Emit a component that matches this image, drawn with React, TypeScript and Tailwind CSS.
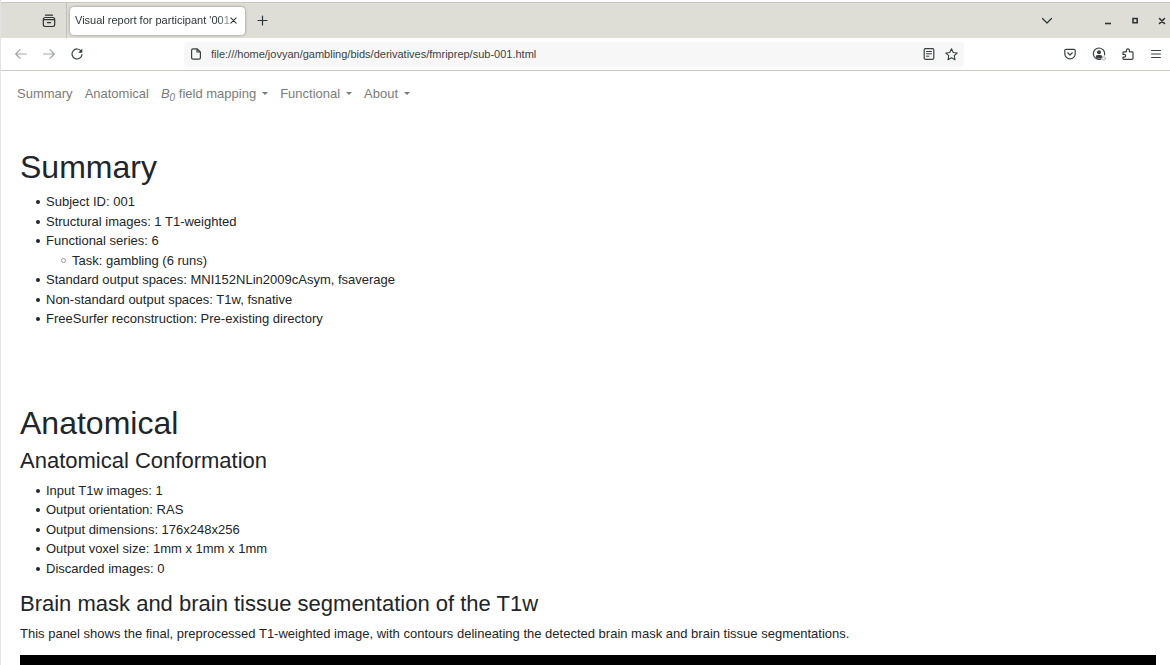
import type { ReactNode } from "react";

function Icon({ children, className = "size-4", box = "0 0 16 16" }: { children: ReactNode; className?: string; box?: string }) {
  return (
    <svg viewBox={box} className={`shrink-0 ${className}`} fill="none" stroke="currentColor" strokeWidth="1.2" strokeLinecap="round" strokeLinejoin="round" aria-hidden="true">
      {children}
    </svg>
  );
}

function IconButton({ label, className = "", children }: { label: string; className?: string; children: ReactNode }) {
  return (
    <button type="button" aria-label={label} className={`flex shrink-0 items-center justify-center ${className}`}>
      {children}
    </button>
  );
}

function TabBar() {
  return (
    <div className="flex h-9 items-center border-t border-[#c9c8c0] bg-[#deddd6] text-[#2e3436]">
      <div className="flex h-full w-[66px] shrink-0 items-center justify-end border-r border-[#c0bfb8] pr-[10px]">
        <IconButton label="Recent browsing">
          <Icon className="size-[14px]" box="0 0 14 14">
            <path d="M3.500 1.200h7" />
            <path d="M1.300 5.400q0-1.900 1.900-1.900h7.600q1.900 0 1.900 1.900v5.200q0 1.900-1.900 1.900H3.200q-1.900 0-1.900-1.900zM1.500 5.600h11M5.400 8.600h3.200" />
          </Icon>
        </IconButton>
      </div>
      <div className="ml-[3px] flex h-7 w-[175px] shrink-0 items-center rounded bg-white pr-2 pl-[5px] shadow-[0_0_3px_rgba(0,0,0,0.4)]">
        <span className="min-w-0 flex-1 overflow-hidden text-[11px] whitespace-nowrap [mask-image:linear-gradient(to_right,black_92%,rgba(0,0,0,0.4))]">
          Visual report for participant &apos;001
        </span>
        <IconButton label="Close tab">
          <Icon className="size-[7px]" box="0 0 8 8">
            <path d="M1 1l6 6M7 1L1 7" />
          </Icon>
        </IconButton>
      </div>
      <IconButton label="New tab" className="ml-3">
        <Icon className="size-[11px]" box="0 0 11 11">
          <path d="M5.500 1v9M1 5.500h9" />
        </Icon>
      </IconButton>
      <div className="ml-auto flex shrink-0 items-center">
        <IconButton label="List all tabs" className="mr-[51px]">
          <Icon className="size-[12px]" box="0 0 12 12">
            <path d="M1.500 3.500L6 8l4.500-4.500" />
          </Icon>
        </IconButton>
        <IconButton label="Minimize" className="mr-[19px]">
          <Icon className="size-2" box="0 0 8 8">
            <path d="M1 6.500h6" strokeWidth="1.600" strokeLinecap="butt" />
          </Icon>
        </IconButton>
        <IconButton label="Maximize" className="mr-[19px]">
          <Icon className="size-2" box="0 0 8 8">
            <path d="M2 1.500h4.200v4.200H2z" strokeWidth="1.600" strokeLinejoin="miter" />
          </Icon>
        </IconButton>
        <IconButton label="Close window" className="mr-1">
          <Icon className="size-2" box="0 0 8 8">
            <path d="M1.500 1.500l5 5M6.500 1.500l-5 5" strokeWidth="1.600" />
          </Icon>
        </IconButton>
      </div>
    </div>
  );
}

function Toolbar() {
  return (
    <div className="flex h-[33px] items-center border-b border-[#cccbc4] bg-white text-[#3b4042]">
      <div className="flex w-[183px] shrink-0 items-center gap-4 pl-[14px]">
        <IconButton label="Back" className="text-[#a3a5a6]">
          <Icon className="size-3" box="0 0 12 12">
            <path d="M11.400 6H.8M5 1.600L.7 6 5 10.400" />
          </Icon>
        </IconButton>
        <IconButton label="Forward" className="text-[#a3a5a6]">
          <Icon className="size-3" box="0 0 12 12">
            <path d="M.6 6h10.600M7 1.600L11.300 6 7 10.400" />
          </Icon>
        </IconButton>
        <IconButton label="Reload">
          <Icon className="size-3" box="0 0 12 12">
            <path d="M10.200 3.200A5 5 0 1 0 11 6.600" />
            <path d="M11.300.8v4H7.200z" fill="currentColor" stroke="none" />
          </Icon>
        </IconButton>
      </div>
      <div className="flex h-[25px] w-full max-w-[780px] min-w-0 items-center rounded bg-[#f7f7f7] px-[6px]">
        <Icon className="size-3" box="0 0 12 12">
          <path d="M3 .8h4L10.400 4v5.800q0 1.400-1.400 1.400H3q-1.400 0-1.400-1.400V2.200Q1.600.8 3 .8zM7 .8V4h3.400" />
        </Icon>
        <input
          aria-label="Address"
          defaultValue="file:///home/jovyan/gambling/bids/derivatives/fmriprep/sub-001.html"
          className="ml-[9px] min-w-0 flex-1 bg-transparent pt-px text-[11px] outline-none"
        />
        <IconButton label="Reader view" className="mr-[10px]">
          <Icon className="size-3" box="0 0 12 12">
            <rect x="1.200" y=".7" width="9.600" height="10.600" rx="1.200" />
            <path d="M3.500 3.500h5M3.500 5.800h5M3.500 8.200h2.500" strokeWidth="1" />
          </Icon>
        </IconButton>
        <IconButton label="Bookmark this page">
          <Icon className="size-[13px]" box="0 0 13 13">
            <path d="M6.500.8l1.700 3.700 4 .5-3 2.700.8 4-3.500-2-3.500 2 .8-4-3-2.700 4-.5z" strokeWidth="1.100" />
          </Icon>
        </IconButton>
      </div>
      <div className="ml-auto flex shrink-0 items-center gap-4 pr-2">
        <IconButton label="Save to Pocket">
          <Icon className="size-3" box="0 0 12 12">
            <path d="M2 1.300h8q1.200 0 1.200 1.200v3.200a5.200 5.200 0 0 1-10.400 0V2.500Q.8 1.300 2 1.300z" />
            <path d="M3.700 4.800L6 7l2.300-2.200" />
          </Icon>
        </IconButton>
        <IconButton label="Account">
          <Icon className="size-[14px]" box="0 0 14 14">
            <path d="M8.800 12.100A5.700 5.700 0 1 1 12.600 7.800" />
            <circle cx="7" cy="5.200" r="2" fill="currentColor" stroke="none" />
            <path d="M3.600 9.900q0-2 2-2h2.800q2 0 2 2l-1.200 1.500H4.900z" fill="currentColor" stroke="none" />
            <circle cx="11.800" cy="11.400" r="1.700" stroke="#a8a8a8" strokeWidth=".9" />
          </Icon>
        </IconButton>
        <IconButton label="Extensions">
          <Icon className="size-3" box="0 0 12 12">
            <path d="M1 5.500V4.600q0-.8.800-.8h2.600V2.300a1.500 1.500 0 0 1 3 0v1.500h2.800q.8 0 .8.800v6q0 .8-.8.800H1.800q-.8 0-.8-.8V9.200h1.300a1.400 1.400 0 0 0 0-2.800H1z" />
          </Icon>
        </IconButton>
        <IconButton label="Open application menu">
          <Icon className="size-3" box="0 0 12 12">
            <path d="M1.500 2.500h9M1.500 6h9M1.500 9.500h9" strokeWidth="1" />
          </Icon>
        </IconButton>
      </div>
    </div>
  );
}

function Caret() {
  return <span aria-hidden="true" className="ml-[6px] inline-block border-x-[3px] border-t-[3px] border-x-transparent border-t-current align-[3px]" />;
}

function ReportNav() {
  return (
    <nav className="flex h-[46px] items-center gap-3 pl-4 text-[13px] whitespace-nowrap text-[#7b7b7b]">
      <a href="#summary">Summary</a>
      <a href="#anatomical">Anatomical</a>
      <button type="button">
        <i>B<sub className="text-[10px]">0</sub></i> field mapping
        <Caret />
      </button>
      <button type="button">Functional<Caret /></button>
      <button type="button">About<Caret /></button>
    </nav>
  );
}

function Item({ children }: { children: ReactNode }) {
  return (
    <li className="before:mr-[6px] before:-ml-[10px] before:inline-block before:size-1 before:rounded-full before:bg-current before:align-[2px] before:content-['']">
      {children}
    </li>
  );
}

export default function App() {
  return (
    <div className="min-h-screen border-l border-[#e2e2e2] bg-white pt-[2px] font-['Liberation_Sans',Arial,sans-serif] text-[#212529]">
      <header>
        <TabBar />
        <Toolbar />
        <ReportNav />
      </header>
      <main className="pr-[14px] pl-[19px] text-[13px] leading-normal">
        <section id="summary" className="pt-[30px]">
          <h1 className="text-[32px] leading-10">Summary</h1>
          <ul className="mt-[5px] pl-[26px]">
            <Item>Subject ID: 001</Item>
            <Item>Structural images: 1 T1-weighted</Item>
            <Item>
              Functional series: 6
              <ul className="pl-[26px]">
                <li className="before:mr-[6px] before:-ml-[11px] before:inline-block before:size-[5px] before:rounded-full before:border before:border-[#999b9d] before:align-[2px] before:content-['']">
                  Task: gambling (6 runs)
                </li>
              </ul>
            </Item>
            <Item>Standard output spaces: MNI152NLin2009cAsym, fsaverage</Item>
            <Item>Non-standard output spaces: T1w, fsnative</Item>
            <Item>FreeSurfer reconstruction: Pre-existing directory</Item>
          </ul>
        </section>
        <section id="anatomical" className="pt-[74px]">
          <h1 className="text-[32px] leading-10">Anatomical</h1>
          <h2 className="mt-1 text-[22px] leading-7">Anatomical Conformation</h2>
          <ul className="mt-[6px] pl-[26px]">
            <Item>Input T1w images: 1</Item>
            <Item>Output orientation: RAS</Item>
            <Item>Output dimensions: 176x248x256</Item>
            <Item>Output voxel size: 1mm x 1mm x 1mm</Item>
            <Item>Discarded images: 0</Item>
          </ul>
          <h2 className="mt-3 text-[22px] leading-7">Brain mask and brain tissue segmentation of the T1w</h2>
          <p className="mt-[6px]">
            This panel shows the final, preprocessed T1-weighted image, with contours delineating the detected brain mask and brain tissue segmentations.
          </p>
          <div role="img" aria-label="Brain mask and tissue segmentation mosaic" className="mt-[11px] h-3 bg-black" />
        </section>
      </main>
    </div>
  );
}
